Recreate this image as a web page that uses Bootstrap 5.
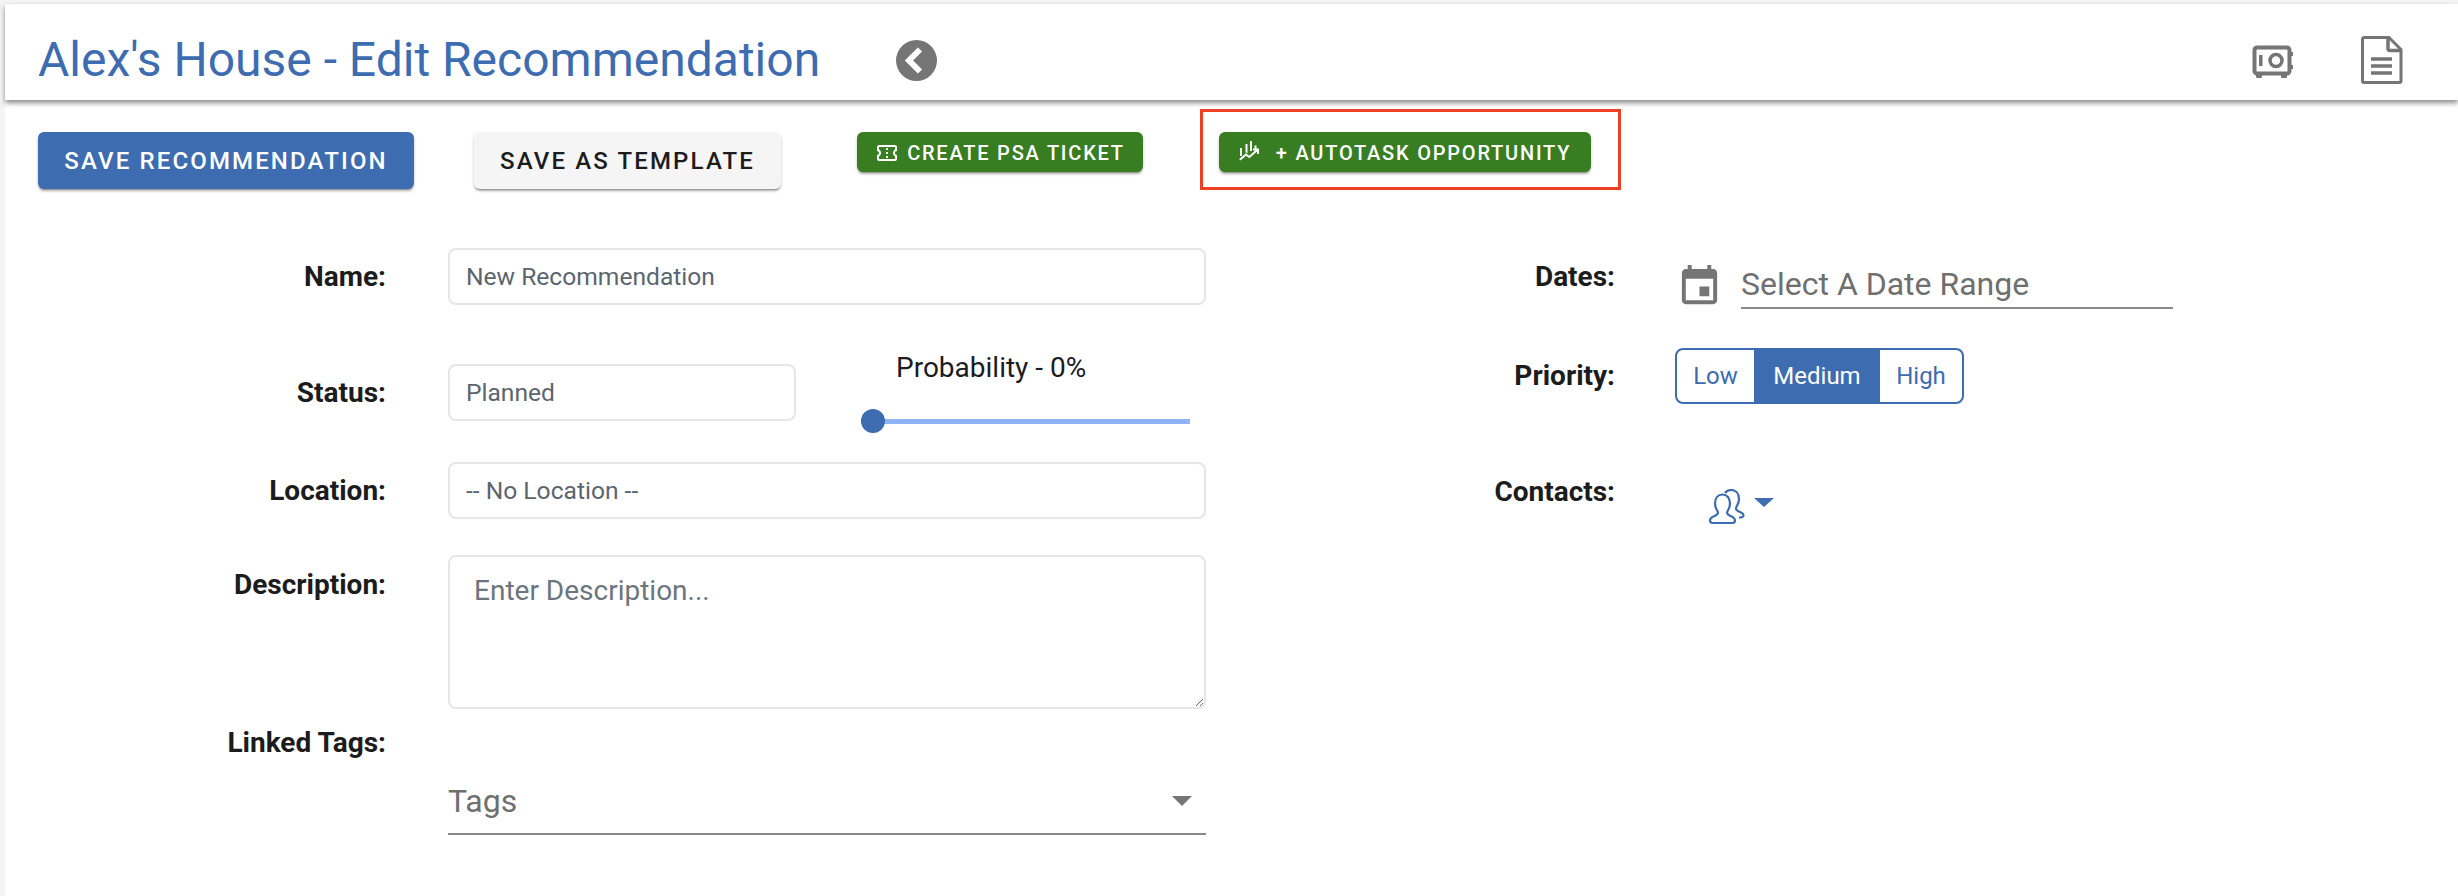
<!DOCTYPE html>
<html lang="en"><head><meta charset="utf-8"><title>Edit Recommendation</title>
<link href="https://cdn.jsdelivr.net/npm/bootstrap@5.3.0/dist/css/bootstrap.min.css" rel="stylesheet">
<style>
html,body{height:100%;}
body{background:#f4f4f4;font-family:Roboto,"Liberation Sans",sans-serif;overflow:hidden;padding:4px 0 0 5px;color:#1c1c1c;}
.app-page{background:#fff;height:100%;}
.top-bar{height:96px;background:#fff;box-shadow:0 3px 5px rgba(0,0,0,.45);padding:16px 55px 0 33px;position:relative;}
.page-title{font-size:48px;font-weight:400;color:#3d6cb0;margin:0;width:858px;letter-spacing:0;line-height:1;}
.tool-row{height:81px;margin-top:9px;padding-left:33px;}
.act{font-family:Roboto,sans-serif;font-weight:500;text-transform:uppercase;border:0;border-radius:6px;box-shadow:0 3px 2px -2px rgba(0,0,0,.3),0 2px 3px rgba(0,0,0,.25);letter-spacing:.0892857em;display:inline-flex;align-items:center;justify-content:center;white-space:nowrap;}
.act-lg{height:57px;font-size:24px;margin-top:23px;}
.act-save{width:376px;background:#3d6cb0;color:#fff;}
.act-tpl{width:307px;background:#f5f5f5;color:#1c1c1c;margin-left:60px;}
.act-sm{height:40px;font-size:20px;background:#387d22;color:#fff;padding-top:2px;}
.act-psa{width:286px;margin:23px 0 0 76px;}
.mark-box{border:3px solid #ee4023;width:421px;height:81px;margin-left:57px;padding:20px 0 0 16px;}
.act-auto{width:372px;}
.form-area{margin-top:58px;}
.left-part{width:1201px;flex:none;}
.right-part{flex:none;margin-left:49px;}
.lbl-l{width:381px;flex:none;text-align:right;font-size:28px;font-weight:700;margin-right:62px;line-height:1.2;color:#1c1c1c;}
.lbl-r{width:360px;flex:none;text-align:right;font-size:28px;font-weight:700;margin-right:60px;line-height:1.2;color:#1c1c1c;}
.lbl-date{margin-top:12px;}
.field{height:57px;font-size:24.6px;border:2px solid #e6e6ea;border-radius:8px;color:#5c656e;padding:0 16px;background:#fff;font-family:Roboto,sans-serif;}
.field-w{width:758px;flex:none;}
.field-s{width:348px;flex:none;}
.row-a{height:57px;}
.gap-status{margin-top:59px;}
.gap-loc{margin-top:41px;}
.gap-desc{margin-top:36px;}
.desc-box{height:154px;width:758px;font-size:28px;padding:13px 24px;border:2px solid #e6e6ea;border-radius:8px;resize:both;font-family:Roboto,sans-serif;}
.desc-box::placeholder{color:#6c757d;opacity:1;}
.desc-lbl{padding-top:13px;}
.prob{margin-left:65px;width:240px;position:relative;}
.prob-txt{font-size:28px;margin:0 0 0 35px;line-height:1.2;white-space:nowrap;color:#1c1c1c;}
.prob-range{width:329px;height:24px;margin-top:25px;padding:0;display:block;}
.prob-range::-webkit-slider-runnable-track{height:5px;background:#8fb4f5;border-radius:0;}
.prob-range::-webkit-slider-thumb{width:24px;height:24px;margin-top:-10px;border-radius:50%;background:#3d6cb0;border:0;box-shadow:none;}
.tag-lbl-row{margin-top:17px;}
.tag-sel{width:758px;margin:19px 0 0 443px;height:56px;border-bottom:2px solid #8a8a8a;font-size:32px;color:#6f6f6f;padding-bottom:9px;}
.tag-caret{width:0;height:0;border-left:10px solid transparent;border-right:10px solid transparent;border-top:10px solid #757575;margin:0 14px 0 0;}
.date-ico{margin:15px 18px 0 1px;flex:none;}
.date-in{width:432px;height:47px;border-bottom:2px solid #8a8a8a;font-size:32px;color:#6f6f6f;margin-top:14px;padding-bottom:1px;line-height:1;}
.row-b{height:57px;}
.pri-gap{margin-top:43px;}
.pri-group .btn{font-size:24px;height:56px;padding:0;color:#3d6cb0;border-color:#3d6cb0;border-width:2px;background:#fff;font-family:Roboto,sans-serif;display:flex;align-items:center;justify-content:center;border-radius:8px;}
.pri-group .btn.active{background:#3d6cb0;color:#fff;border-color:#3d6cb0;}
.pri-low{width:81px;}
.pri-med{width:124px;}
.pri-high{width:86px;}
.con-gap{margin-top:58px;height:60px;}
.con-ico{margin:27px 0 0 94px;}
.con-caret{width:0;height:0;border-left:10px solid transparent;border-right:10px solid transparent;border-top:9px solid #3d6cb0;margin:36px 0 0 9px;}
.con-lbl{margin-top:13px;margin-right:0;}
.back-ico{display:block;}
.head-ico{flex:none;}
.safe-ico{margin-top:4px;}
.doc-ico{margin-left:67px;}
.auto-ico{margin:-4px 17px 0 0;}
</style></head>
<body>
<div class="app-page">
  <div class="top-bar d-flex align-items-center">
    <h1 class="page-title">Alex's House - Edit Recommendation</h1>
    <svg class="back-ico" width="41" height="41" viewBox="0 0 41 41"><circle cx="20.500" cy="20.500" r="20.500" fill="#757575"/><polyline points="24,9.500 13,20.500 24,31.500" fill="none" stroke="#fff" stroke-width="6"/></svg>
    <div class="ms-auto d-flex align-items-center">
      <svg class="head-ico safe-ico" width="42" height="34" viewBox="0 0 42 34"><rect x="2.500" y="2.500" width="35" height="26" rx="2.500" fill="none" stroke="#757575" stroke-width="4"/><circle cx="24" cy="15.500" r="6" fill="none" stroke="#757575" stroke-width="3.500"/><rect x="7" y="10" width="3.500" height="11" fill="#757575"/><rect x="38" y="7" width="3" height="4" fill="#757575"/><rect x="38" y="20" width="3" height="4" fill="#757575"/><rect x="4" y="29" width="6" height="4" rx="1" fill="#757575"/><rect x="29" y="29" width="6" height="4" rx="1" fill="#757575"/></svg>
      <svg class="head-ico doc-ico" width="42" height="48" viewBox="0 0 42 48"><path d="M3 1.500H28L40 13.500V45a1.500 1.500 0 0 1-1.500 1.500H3A1.500 1.500 0 0 1 1.500 45V3A1.500 1.500 0 0 1 3 1.500Z" fill="none" stroke="#757575" stroke-width="3"/><path d="M27 2V12.500a2 2 0 0 0 2 2H40" fill="none" stroke="#757575" stroke-width="3.500"/><path d="M10 23H31M10 30H31M10 37H31" stroke="#757575" stroke-width="3.500"/></svg>
    </div>
  </div>

  <div class="tool-row d-flex align-items-start">
    <button class="act act-lg act-save">Save Recommendation</button>
    <button class="act act-lg act-tpl">Save as Template</button>
    <button class="act act-sm act-psa gap-2"><svg width="24" height="24" viewBox="0 0 24 24" fill="#fff"><path d="M22 10V6C22 4.890 21.100 4 20 4H4C2.900 4 2 4.890 2 6V10C3.110 10 4 10.900 4 12S3.110 14 2 14V18C2 19.100 2.900 20 4 20H20C21.100 20 22 19.100 22 18V14C20.900 14 20 13.100 20 12S20.900 10 22 10M20 8.540C18.810 9.230 18 10.530 18 12S18.810 14.770 20 15.460V18H4V15.460C5.190 14.770 6 13.470 6 12C6 10.500 5.200 9.230 4 8.540L4 6H20V8.540M11 15H13V17H11M11 11H13V13H11M11 7H13V9H11V7Z"/></svg>Create PSA Ticket</button>
    <div class="mark-box">
      <button class="act act-sm act-auto"><svg class="auto-ico" width="20" height="20" viewBox="0 0 20 20" fill="none" stroke="#fff" stroke-width="2"><path d="M2 7V15M7.500 3V12.500M12 0V10M16.500 4.500V10.500"/><path d="M0.800 18.700L7 13.500L10.300 16L18.300 9" stroke="#387d22" stroke-width="3.500"/><path d="M0.800 18.700L7 13.500L10.300 16L18.300 9"/><path d="M14 8.500H19V13"/></svg>+ Autotask Opportunity</button>
    </div>
  </div>

  <div class="form-area d-flex align-items-start">
    <div class="left-part">
      <div class="d-flex align-items-center row-a">
        <label class="lbl-l">Name:</label>
        <input class="form-control field field-w" value="New Recommendation">
      </div>
      <div class="d-flex align-items-center row-a gap-status">
        <label class="lbl-l">Status:</label>
        <input class="form-control field field-s" value="Planned">
        <div class="prob">
          <div class="prob-txt">Probability - 0%</div>
          <input type="range" class="form-range prob-range" min="0" max="100" value="0">
        </div>
      </div>
      <div class="d-flex align-items-center row-a gap-loc">
        <label class="lbl-l">Location:</label>
        <input class="form-control field field-w" value="-- No Location --">
      </div>
      <div class="d-flex align-items-start gap-desc">
        <label class="lbl-l desc-lbl">Description:</label>
        <textarea class="form-control desc-box" placeholder="Enter Description..."></textarea>
      </div>
      <div class="d-flex tag-lbl-row"><label class="lbl-l">Linked Tags:</label></div>
      <div class="tag-sel d-flex align-items-center justify-content-between">
        <span>Tags</span><span class="tag-caret"></span>
      </div>
    </div>
    <div class="right-part">
      <div class="d-flex align-items-start row-b">
        <label class="lbl-r lbl-date">Dates:</label>
        <svg class="date-ico" width="47" height="47" viewBox="0 0 24 24" fill="#757575"><path d="M17 12h-5v5h5v-5zM16 1v2H8V1H6v2H5c-1.110 0-1.990.9-1.990 2L3 19c0 1.100.89 2 2 2h14c1.100 0 2-.9 2-2V5c0-1.100-.9-2-2-2h-1V1h-2zm3 18H5V8h14v11z"/></svg>
        <div class="date-in d-flex align-items-center">Select A Date Range</div>
      </div>
      <div class="d-flex align-items-center pri-gap">
        <label class="lbl-r">Priority:</label>
        <div class="btn-group pri-group" role="group">
          <button class="btn pri-low">Low</button>
          <button class="btn pri-med active">Medium</button>
          <button class="btn pri-high">High</button>
        </div>
      </div>
      <div class="d-flex align-items-start con-gap">
        <label class="lbl-r con-lbl">Contacts:</label>
        <svg class="con-ico" width="36" height="36" viewBox="0 0 36 36" fill="none" stroke="#3d6cb0" stroke-width="2.200"><path d="M4 34h19.500c1.500 0 2.500-1 2.500-2.500 0-2.500-2-3.500-4.500-4.500-2-1-3.500-1.500-3.500-3.500 0-1.500 3-4 3-9 0-5.500-3-9-7.500-9s-7.500 3.500-7.500 9c0 5 3 7.500 3 9 0 2-1.500 2.500-3.500 3.500-2.500 1-4.500 2-4.500 4.500 0 1.500 1 2.500 2.500 2.500z"/><path d="M16 4c1.500-2 4-3 6-3 5 0 8 3.500 8 9 0 5-3 7.500-3 9.500 0 1.500 1.500 2.500 4 3.500 2 .8 3.500 1.800 3.500 3.500 0 1.500-1.500 2-4.500 2"/></svg>
        <span class="con-caret"></span>
      </div>
    </div>
  </div>
</div>
</body></html>
